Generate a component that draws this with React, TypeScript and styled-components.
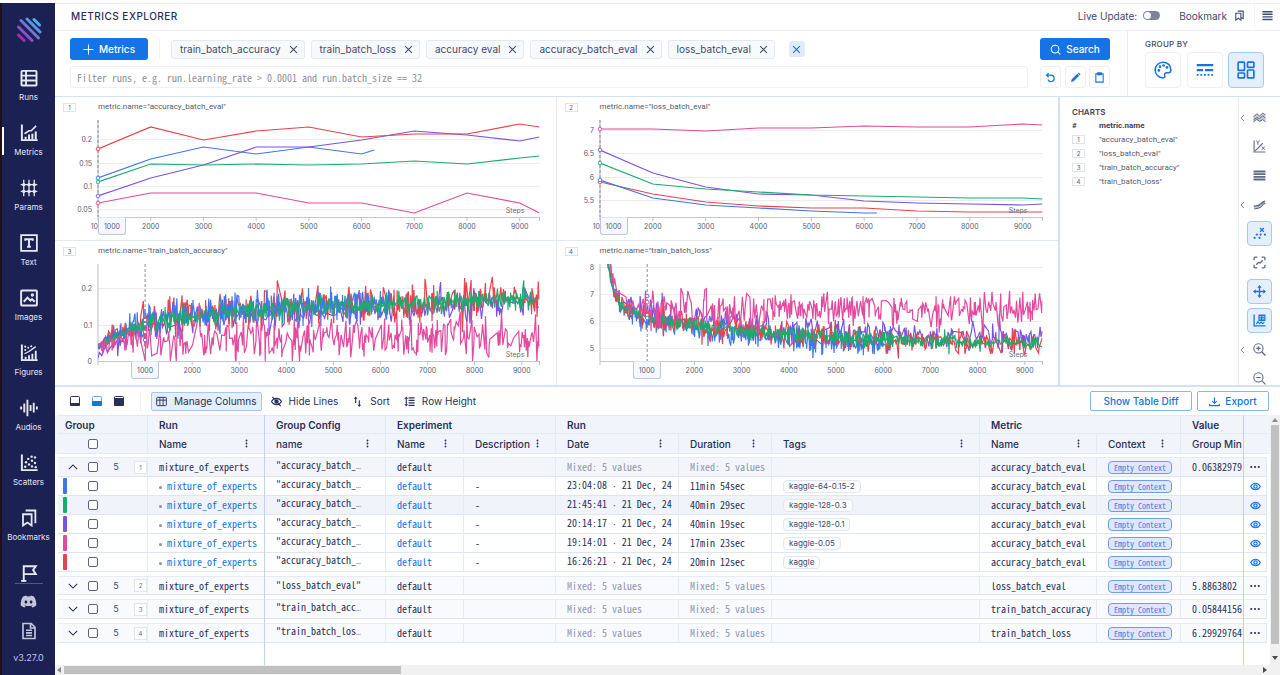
import React from 'react';
import styled, { createGlobalStyle, css } from 'styled-components';
import { FaDiscord } from 'react-icons/fa';

const MONO = '"Noto Sans Mono CJK SC", "Noto Sans Mono CJK JP", "Liberation Mono", monospace';
const C = {
  navy: '#27305a',
  ink: '#414b6d',
  soft: '#606986',
  muted: '#8e94ac',
  blue: '#1473e6',
  line: '#e3e9f4',
  edge: '#d2e3f8',
  pin: '#c3d1f0',
  tint: '#e5effc',
  tintEdge: '#a6c8f4',
  head: '#f1f4fa',
};
const S = { red: '#e8424a', blue: '#3f76ea', green: '#1cab6c', purple: '#7b53e2', pink: '#e2499f' };

const Global = createGlobalStyle`
  * { box-sizing: border-box; }
  html, body { margin: 0; padding: 0; background: #fff; }
  body { font-family: Inter, "Liberation Sans", sans-serif; font-size: 10px; color: ${C.navy}; overflow: hidden; }
  button { font: inherit; color: inherit; background: none; border: 0; padding: 0; cursor: pointer; }
  a { color: inherit; text-decoration: none; }
  svg { display: block; flex: none; }
`;

/* ---------- frame ---------- */
const Page = styled.div`
  display: flex;
  height: 100vh;
  border-top: 3px solid #fdfdfe;
`;
const Sidebar = styled.aside`
  width: 55px;
  flex: none;
  background: #1c2153;
  border-left: 2px solid #1f101c;
  color: #fff;
  display: flex;
  flex-direction: column;
  align-items: center;
`;
const LogoLink = styled.a`
  padding: 14px 0 15px;
`;
const Nav = styled.nav`
  flex: 1;
  min-height: 0;
  overflow: hidden;
  width: 100%;
`;
const NavLink = styled.a<{ $active?: boolean }>`
  height: 55px;
  display: flex;
  flex-direction: column;
  align-items: center;
  justify-content: center;
  gap: 4px;
  font-size: 8px;
  line-height: 12px;
  color: #e6e8f2;
  position: relative;
  ${p => p.$active && css`
    &::before {
      content: '';
      position: absolute;
      left: 0;
      top: 14px;
      width: 2px;
      height: 28px;
      background: #fff;
    }
  `}
`;
const NavText = styled.span`
  height: 12px;
`;
const SideFoot = styled.div`
  width: 28px;
  border-top: 1px solid #545982;
  display: flex;
  flex-direction: column;
  align-items: center;
  gap: 12px;
  padding: 9px 0 11px;
  color: #c3c6d6;
  font-size: 9px;
  line-height: 12px;
`;
const Main = styled.main`
  flex: 1;
  min-width: 0;
  display: flex;
  flex-direction: column;
  border-top: 1px solid #ebedf3;
`;

/* ---------- header ---------- */
const TopBar = styled.header`
  height: 27px;
  padding: 0 7px 3px 16px;
  border-bottom: 1px solid #edf2f9;
  display: flex;
  align-items: center;
  color: ${C.ink};
`;
const Title = styled.h1`
  margin: 0;
  flex: 1;
  font-size: 10px;
  font-weight: 500;
  letter-spacing: 0.5px;
  color: ${C.navy};
`;
const LiveLabel = styled.label`
  display: flex;
  align-items: center;
  gap: 6px;
  margin-right: 19px;
`;
const Toggle = styled.input`
  appearance: none;
  margin: 0;
  width: 17px;
  height: 9px;
  border-radius: 5px;
  background: #7c829c;
  display: flex;
  align-items: center;
  &::before {
    content: '';
    width: 7px;
    height: 7px;
    margin-left: 1px;
    border-radius: 50%;
    background: #fff;
  }
`;
const BarButton = styled.button`
  display: flex;
  align-items: center;
  gap: 7px;
`;
const MenuButton = styled(BarButton)`
  margin-left: 9px;
  padding-left: 7px;
  border-left: 1px solid #f0f3f9;
  height: 23px;
`;

/* ---------- query controls ---------- */
const Controls = styled.section`
  display: flex;
  height: 66px;
  border-bottom: 1px solid ${C.edge};
`;
const QueryArea = styled.form`
  flex: 1;
  min-width: 0;
  display: flex;
  padding: 7px 17px 8px 15px;
  gap: 12px;
`;
const QueryMain = styled.div`
  flex: 1;
  min-width: 0;
`;
const QueryRow = styled.div`
  display: flex;
  align-items: center;
  height: 22px;
`;
const Primary = styled.button`
  height: 22px;
  width: 100%;
  border-radius: 3px;
  background: ${C.blue};
  color: #fff;
  font-weight: 500;
  display: flex;
  align-items: center;
  justify-content: center;
  gap: 5px;
`;
const AddMetrics = styled(Primary)`
  width: 78px;
`;
const Rule = styled.span<{ $gap: number }>`
  width: 1px;
  height: 20px;
  margin: 0 ${p => p.$gap}px;
  background: #edf1f8;
`;
const Chip = styled.span`
  height: 19px;
  margin-right: 6px;
  padding: 0 6px 0 8px;
  border: 1px solid #e3e8f2;
  border-radius: 3px;
  background: #f8f9fc;
  color: ${C.ink};
  display: flex;
  align-items: center;
  gap: 8px;
`;
const ClearAll = styled.button`
  width: 16px;
  height: 16px;
  margin-left: 8px;
  border-radius: 3px;
  background: #dfebfb;
  color: ${C.blue};
  display: grid;
  place-items: center;
`;
const FilterInput = styled.input`
  display: block;
  width: 100%;
  height: 22px;
  margin-top: 6px;
  padding: 0 6px;
  border: 1px solid #edf0f7;
  border-radius: 3px;
  font-family: ${MONO};
  font-size: 10px;
  color: ${C.ink};
  outline: none;
  &::placeholder { color: #8a8f9e; opacity: 1; }
`;
const SearchCol = styled.div`
  width: 70px;
`;
const IconRow = styled.div`
  display: flex;
  justify-content: space-between;
  margin-top: 6px;
`;
const SmallIconButton = styled.button`
  width: 21px;
  height: 22px;
  border: 1px solid #edf0f7;
  border-radius: 3px;
  color: ${C.blue};
  display: grid;
  place-items: center;
`;
const GroupBy = styled.div`
  width: 153px;
  border-left: 1px solid #e6edf7;
  padding: 8px 16px 0 17px;
`;
const GroupTitle = styled.h2`
  margin: 0 0 2px;
  font-size: 8px;
  line-height: 11px;
  font-weight: 500;
  letter-spacing: 0.2px;
  color: ${C.ink};
`;
const GroupRow = styled.div`
  display: flex;
  justify-content: space-between;
`;
const GroupButton = styled.button<{ $on?: boolean }>`
  width: 36px;
  height: 36px;
  border: 1px solid ${p => (p.$on ? C.tintEdge : '#edf1f8')};
  border-radius: 4px;
  background: ${p => (p.$on ? C.tint : '#fff')};
  color: ${C.blue};
  display: grid;
  place-items: center;
`;

/* ---------- charts ---------- */
const ChartSection = styled.section`
  display: flex;
  height: 290px;
  border-bottom: 2px solid ${C.edge};
`;
const ChartGrid = styled.div`
  flex: 1;
  min-width: 0;
  display: grid;
  grid-template-columns: 1fr 1fr;
  grid-template-rows: 144px 144px;
`;
const ChartCell = styled.article`
  min-width: 0;
  border-right: 1px solid ${C.line};
  border-bottom: 1px solid ${C.line};
  padding: 5px 16px 0 8px;
  &:nth-child(even) { border-right: 0; }
  &:nth-child(n + 3) { border-bottom: 0; }
`;
const ChartHead = styled.header`
  display: flex;
  align-items: center;
  gap: 22px;
  height: 10px;
  color: #555b6b;
`;
const Num = styled.span`
  width: 13px;
  height: 9px;
  border: 1px solid #dfe3ec;
  font-size: 6px;
  line-height: 7px;
  text-align: center;
  color: #555b6b;
  display: inline-block;
`;
const ChartTitle = styled.h3`
  margin: 0;
  font: 400 8px/10px Roboto, sans-serif;
`;
const Plot = styled.div`
  position: relative;
  margin: 8px 0 0 35px;
  & > svg { overflow: visible; }
`;
const PlotSvg = styled.svg`
  font-size: 7px;
  fill: #555e7c;
`;
const StepTag = styled.span<{ $center?: boolean }>`
  position: absolute;
  top: 97px;
  width: 28px;
  height: 18px;
  border: 1px solid #b9c5e6;
  border-top-color: #dfe4f0;
  border-radius: 0 0 3px 3px;
  background: #f7f8fd;
  font-size: 7px;
  line-height: 17px;
  text-align: center;
  color: #555e7c;
  transform: ${p => (p.$center ? 'translateX(-50%)' : 'none')};
`;
const Legend = styled.aside`
  width: 180px;
  border-left: 2px solid ${C.edge};
  padding: 9px 12px;
`;
const LegendTitle = styled.h2`
  margin: 0;
  font-size: 8px;
  line-height: 12px;
  font-weight: 600;
  color: #3b4259;
`;
const LegendTable = styled.table`
  border-collapse: collapse;
  font: 400 8px/9px Roboto, sans-serif;
  color: #555b6b;
  td, th { height: 14px; padding: 0; text-align: left; vertical-align: middle; }
  th { color: #3b4259; font-weight: 700; }
  th:first-child, td:first-child { width: 27px; }
  ${Num} { display: block; font-family: Inter, sans-serif; }
`;
const Tools = styled.div`
  width: 42px;
  border-left: 1px solid #e6edf7;
  padding-top: 8px;
  overflow: hidden;
`;
const ToolRow = styled.div`
  height: 29px;
  display: flex;
  align-items: flex-start;
`;
const Caret = styled.span`
  width: 8px;
  height: 25px;
  color: #7b8299;
  display: flex;
  align-items: center;
  padding-left: 1px;
`;
const Tool = styled.button<{ $on?: boolean }>`
  width: 25px;
  height: 25px;
  border: 1px solid ${p => (p.$on ? C.tintEdge : 'transparent')};
  border-radius: 4px;
  background: ${p => (p.$on ? C.tint : 'transparent')};
  color: ${p => (p.$on ? C.blue : C.soft)};
  display: grid;
  place-items: center;
`;

/* ---------- table ---------- */
const TableBar = styled.div`
  display: flex;
  align-items: center;
  height: 28px;
  padding: 0 11px 0 14px;
  flex: none;
`;
const LayoutButton = styled.button`
  margin-right: 10px;
`;
const TextButton = styled.button<{ $on?: boolean }>`
  height: 19px;
  margin-right: 4px;
  padding: 0 4px;
  border: 1px solid ${p => (p.$on ? C.tintEdge : 'transparent')};
  border-radius: 2px;
  background: ${p => (p.$on ? C.tint : 'transparent')};
  color: ${C.navy};
  display: flex;
  align-items: center;
  gap: 7px;
`;
const Outline = styled.button<{ $w: number }>`
  width: ${p => p.$w}px;
  height: 20px;
  margin-left: 5px;
  border: 1px solid #87b5f0;
  border-radius: 2px;
  color: ${C.blue};
  font-weight: 500;
  display: flex;
  align-items: center;
  justify-content: center;
  gap: 5px;
`;
const Spring = styled.span`
  flex: 1;
`;
const TableArea = styled.div`
  flex: 1;
  min-height: 0;
  display: flex;
`;
const TableView = styled.div`
  flex: 1;
  min-width: 0;
  overflow: hidden;
  padding: 0 3px;
  position: relative;
`;
const PinEdge = styled.span<{ $side: 'left' | 'right'; $at: number }>`
  position: absolute;
  top: 0;
  bottom: 0;
  ${p => p.$side}: ${p => p.$at}px;
  width: 1px;
  background: ${C.pin};
`;
const Grid = styled.table`
  width: 100%;
  table-layout: fixed;
  border-collapse: separate;
  border-spacing: 0;
  th, td { padding: 0 0 0 11px; text-align: left; white-space: nowrap; overflow: hidden; font-weight: 500; }
  thead th {
    background: ${C.head};
    border-right: 1px solid #e4eaf4;
    border-bottom: 1px solid #e4eaf4;
    height: 20px;
    font-size: 10px;
    line-height: 12px;
  }
  thead tr:first-child th { height: 19px; font-weight: 600; border-top: 1px solid ${C.line}; }
  thead th:first-child { box-shadow: -3px 0 0 ${C.head}; padding-left: 7px; overflow: visible; }
  thead tr:last-child th:first-child { padding-left: 0; }
  thead th:last-child { box-shadow: 3px 0 0 ${C.head}; border-right: 0; overflow: visible; }
  tbody::before { content: ''; display: block; height: 3px; }
  tbody + tbody::before { height: 4px; }
  tbody td { height: 19px; border-right: 1px solid #e4eaf4; border-bottom: 1px solid #dfe6f2; font-family: ${MONO}; font-size: 10px; line-height: 14px; font-weight: 400; }
  tbody td:first-child, tbody td:last-child { padding: 0; }
  tbody td:nth-child(3) { padding-bottom: 2px; }
`;
const DataRow = styled.tr<{ $tone: 'open' | 'plain' | 'hover' | 'group' }>`
  td {
    background: ${p => ({ open: '#f3f5fa', plain: '#fff', hover: '#f0f3f9', group: '#f9fafd' })[p.$tone]};
    ${p => (p.$tone === 'open' || p.$tone === 'group') && css`border-top: 1px solid #e6ebf5;`}
  }
`;
const ThInner = styled.span`
  display: flex;
  align-items: center;
  justify-content: space-between;
  padding-right: 13px;
`;
const Box = styled.input`
  appearance: none;
  margin: 0;
  width: 10px;
  height: 10px;
  border: 1px solid #5c6480;
  border-radius: 2px;
  background: #fff;
  flex: none;
`;
const GroupCell = styled.span`
  display: flex;
  align-items: center;
  height: 17px;
  & > button { width: 30px; display: grid; place-items: center; color: ${C.navy}; }
  & > b { width: 36px; text-align: center; font: 400 9px/12px Inter, sans-serif; color: ${C.ink}; }
  & > i { width: 13px; height: 13px; border: 1px solid #e1e6f0; background: #fff; font: 400 6px/11px Inter, sans-serif; text-align: center; color: ${C.soft}; }
`;
const RunCell = styled.span<{ $color: string }>`
  display: flex;
  align-items: center;
  height: 18px;
  padding-left: 5px;
  &::before { content: ''; width: 4px; height: 16px; border-radius: 1px; background: ${p => p.$color}; margin-right: 21px; }
`;
const RunLink = styled.a`
  color: ${C.blue};
`;
const Dot = styled.span`
  display: inline-block;
  width: 3px;
  height: 3px;
  margin: 0 5px 0 0;
  border-radius: 50%;
  background: #8b91a6;
  vertical-align: middle;
`;
const Dim = styled.span`
  color: ${C.muted};
`;
/* the CJK mono face draws these two marks at double width */
const NarrowMark = styled.span`
  font-family: "Liberation Mono", monospace;
  font-size: 8px;
`;
const Tag = styled.span`
  display: inline-block;
  height: 13px;
  padding: 0 5px;
  border: 1px solid #e1e6f0;
  border-radius: 4px;
  background: #fbfcfe;
  font: 400 8px/11px Inter, sans-serif;
  color: ${C.ink};
  vertical-align: middle;
`;
const Context = styled.span`
  display: inline-block;
  height: 13px;
  padding: 0 5px;
  border: 1px solid #6f9bee;
  border-radius: 4px;
  background: #dfe8fb;
  font-size: 8px;
  line-height: 11px;
  color: #4a7ae0;
  vertical-align: middle;
`;
const ActionButton = styled.button<{ $blue?: boolean }>`
  width: 22px;
  height: 16px;
  color: ${p => (p.$blue ? C.blue : C.navy)};
  display: grid;
  place-items: center;
`;
const VBar = styled.div`
  width: 10px;
  background: #f1f1f1;
  display: flex;
  flex-direction: column;
  align-items: center;
  justify-content: space-between;
  padding: 3px 0 5px;
  color: #8a8a8a;
  &::before { content: ''; order: 1; flex: 1; width: 8px; background: #c1c1c1; margin: 3px 0 12px; }
  & > svg:last-child { order: 2; color: #4a4a4a; }
`;
const HBar = styled.div`
  height: 10px;
  flex: none;
  background: #f1f1f1;
  display: flex;
  align-items: center;
  padding: 0 13px 0 2px;
  gap: 3px;
  color: #8a8a8a;
  & > span { width: 337px; height: 8px; background: #c1c1c1; }
  & > svg:last-child { margin-left: auto; color: #4a4a4a; }
`;

/* ---------- icons ---------- */
type IconProps = { size?: number; sw?: number; children: React.ReactNode };
const Icon = ({ size = 18, sw = 2, children }: IconProps) => (
  <svg width={size} height={size} viewBox="0 0 24 24" fill="none" stroke="currentColor" strokeWidth={sw} aria-hidden="true">
    {children}
  </svg>
);
const X = ({ size = 10 }: { size?: number }) => (
  <Icon size={size} sw={2.8}><path d="M3 3l18 18M21 3L3 21" /></Icon>
);
const dots = (pts: number[][], r: number) => pts.map(([x, y], i) => <circle key={i} cx={x} cy={y} r={r} fill="currentColor" stroke="none" />);

const AXIS = 'M2.5 0.5V21.5H23.5';
const NAV: { label: string; hideText?: boolean; icon: React.ReactNode }[] = [
  { label: 'Runs', icon: <><rect x="2" y="2.500" width="20" height="19.500" rx="1" /><path d="M2 8.800h20M2 15.300h20M8 2v20" strokeWidth="2.500" /></> },
  { label: 'Metrics', icon: <><path d={AXIS} /><path d="M7.500 21v-4M12 21v-7M16.500 21v-8M21 21V10" strokeWidth="2.700" /><path d="M6 13l6-4 3 0L21.500 2.500" strokeWidth="2.200" /></> },
  { label: 'Params', icon: <><path d="M5 1v22M12 1v22M19 1v22M1 7.500h22M1 16.500h22" strokeWidth="1.700" />{dots([[5, 16.500], [12, 7.500], [19, 16.500], [19, 7.500], [5, 7.500], [12, 16.500]], 2.200)}</> },
  { label: 'Text', icon: <><rect x="1.500" y="1.500" width="21" height="21" strokeWidth="2.400" /><path d="M7 9V7h10v2M12 7v10M9.500 17h5" /></> },
  { label: 'Images', icon: <><rect x="1.500" y="2" width="21" height="20" rx="1" /><path d="M5 17l5-5.500 4 4 2-2 3.500 3.500" /><circle cx="16.500" cy="8" r="1" /></> },
  { label: 'Figures', icon: <><path d={AXIS} /><path d="M7.500 21v-4M12 21v-6M16.500 21v-8M21 21V9" strokeWidth="2.500" /><path d="M6 13l6-3 9-6.500" strokeWidth="1.800" />{dots([[7, 8], [11, 5], [15, 3], [7, 3.500]], 1.400)}</> },
  { label: 'Audios', icon: <path d="M1.500 10v4M5.700 6v12M9.900 1v22M14.100 8v8M18.300 5v13M22.500 10v4" strokeWidth="2.500" /> },
  { label: 'Scatters', icon: <><path d={AXIS} />{dots([[7, 17], [8, 11], [12, 14], [11, 6.500], [16, 9], [16, 16.500], [20, 12], [20, 4.500], [21, 17.500], [15.500, 3.500]], 1.600)}</> },
  { label: 'Bookmarks', icon: <><path d="M4 7h11.500v15l-5.700-4-5.800 4z" strokeWidth="2.400" /><path d="M7.500 2H20.500V19" strokeWidth="2.400" /></> },
  { label: 'Explorations', hideText: true, icon: <path d="M5 24V3h16l-3.500 5 3.500 5.500h-16M1.500 22.500h7" strokeWidth="2.600" /> },
];

const Logo = () => (
  <svg width="26" height="26" viewBox="0 0 26 26" fill="none" strokeWidth="3" strokeLinecap="round" aria-label="Aim">
    <defs>
      <linearGradient id="brand" gradientUnits="userSpaceOnUse" x1="3" y1="23" x2="23" y2="3">
        <stop offset="0" stopColor="#b5179e" />
        <stop offset="0.300" stopColor="#8a4fc8" />
        <stop offset="0.600" stopColor="#6a7fd8" />
        <stop offset="1" stopColor="#35c4f5" />
      </linearGradient>
    </defs>
    <path stroke="url(#brand)" d="M18 2.500l5.500 5.500M11 2l13 13M5 3.500l17.500 17.500M2.500 10l13.500 13.500M2.500 18l5.500 5.500" />
  </svg>
);

const LayoutIcon = ({ fill, top, color }: { fill: string; top: number; color: string }) => (
  <svg width="12" height="12" viewBox="0 0 12 12" aria-hidden="true">
    <rect x="1.500" y="1.500" width="9" height="9" rx="1" fill="#fff" stroke={color} />
    <rect x="1" y={top} width="10" height={11 - top} rx="1" fill={fill} />
  </svg>
);

/* ---------- chart data ---------- */
type Series = { color: string; pts: [number, number][] };
const SPAN = 9375;
const stepAt = (i: number) => (i === 9 ? 8375 : i * 1000);
const evalSeries = (color: string, ys: number[], lastStep?: number): Series => ({
  color,
  pts: ys.map((y, i) => [((lastStep && i === ys.length - 1 ? lastStep : stepAt(i)) / 8375) * 1000, y - 120]),
});

const ACCURACY: Series[] = [
  evalSeries(S.pink, [203, 193, 193, 193, 203, 203, 213, 193, 203, 213]),
  evalSeries(S.purple, [196, 178, 165, 147, 147, 140, 131, 135, 141, 137]),
  evalSeries(S.green, [182, 164, 165, 164, 165, 164, 161, 164, 158, 156]),
  evalSeries(S.blue, [178, 159, 147, 154, 147, 154, 150], 5240),
  evalSeries(S.red, [149, 127, 140, 131, 127, 137, 134, 134, 124, 127]),
];
const LOSS: Series[] = [
  evalSeries(S.pink, [129, 129, 131, 128, 128, 126, 127, 127, 124, 125]),
  evalSeries(S.purple, [150, 173, 187, 194, 195, 201, 203, 204, 205, 204]),
  evalSeries(S.green, [163, 184, 189, 192, 195, 196, 197, 198, 198, 199]),
  evalSeries(S.red, [182, 194, 202, 206, 208, 208, 211, 212, 212, 212]),
  evalSeries(S.blue, [180, 198, 205, 208, 211, 213, 213], 5240),
];

function noisy(color: string, seed: number, gap: number, end: number, mean: (s: number) => number, dev: number, toY: (v: number) => number): Series {
  let state = seed;
  const rnd = () => {
    state = (state * 1664525 + 1013904223) % 4294967296;
    return state / 4294967296;
  };
  const pts: [number, number][] = [];
  let s = 0;
  while (s < end) {
    const g = rnd() + rnd() + rnd() + rnd() - 2;
    const spike = rnd() > 0.94 ? 1.8 : 1.1;
    const settle = Math.min(1, 0.35 + s / 1500);
    pts.push([(s / SPAN) * 1000, toY(mean(s) + g * 1.5 * dev * spike * settle)]);
    s += gap * (0.2 + 1.8 * rnd() * rnd() * (rnd() > 0.93 ? 5 : 1.4));
  }
  return { color, pts };
}
const accY = (v: number) => Math.min(97, 97 - v * 364);
const lossY = (v: number) => 3.500 + (8 - v) * 27;
const rise = (s: number) => 0.035 + 0.09 * (1 - Math.exp(-s / 1000)) + (0.045 * s) / SPAN;
const fall = (s: number) => 5.17 + 1.5 * Math.exp(-s / 2700) + 6 * Math.exp(-s / 130);

const TRAIN_ACC: Series[] = [
  noisy(S.purple, 11, 30, SPAN, s => rise(s) - 0.014, 0.022, accY),
  noisy(S.red, 23, 22, SPAN, s => rise(s) + 0.006, 0.024, accY),
  noisy(S.blue, 37, 13, 6200, s => rise(s) + 0.008, 0.021, accY),
  noisy(S.green, 41, 14, SPAN, s => rise(s) + 0.001, 0.014, accY),
  noisy(S.pink, 59, 24, SPAN, s => 0.042 + 0.022 * Math.min(1, s / 700), 0.030, accY),
];
const TRAIN_LOSS: Series[] = [
  noisy(S.purple, 13, 26, SPAN, s => fall(s) + 0.2, 0.24, lossY),
  noisy(S.blue, 29, 13, 6200, s => fall(s) - 0.14, 0.22, lossY),
  noisy(S.red, 31, 22, SPAN, s => fall(s), 0.23, lossY),
  noisy(S.green, 43, 14, SPAN, s => fall(s), 0.14, lossY),
  noisy(S.pink, 67, 24, SPAN, s => 6.450 + 6 * Math.exp(-s / 170), 0.34, lossY),
];

type ChartDef = {
  name: string;
  series: Series[];
  yTicks: [string, number][];
  zoomed: boolean;
  marks: [string, number][];
};
const CHARTS: ChartDef[] = [
  { name: 'accuracy_batch_eval', series: ACCURACY, zoomed: true, yTicks: [['0.2', 19], ['0.15', 43], ['0.1', 66], ['0.05', 89]], marks: ACCURACY.map(s => [s.color, s.pts[0][1]]) },
  { name: 'loss_batch_eval', series: LOSS, zoomed: true, yTicks: [['7', 10], ['6.5', 33], ['6', 57], ['5.5', 80]], marks: LOSS.map(s => [s.color, s.pts[0][1]]) },
  { name: 'train_batch_accuracy', series: TRAIN_ACC, zoomed: false, yTicks: [['0.2', 24], ['0.1', 61], ['0', 97]], marks: [[S.red, 56], [S.blue, 60], [S.purple, 76], [S.pink, 68]] },
  { name: 'train_batch_loss', series: TRAIN_LOSS, zoomed: false, yTicks: [['8', 3], ['7', 30], ['6', 57], ['5', 84]], marks: [[S.purple, 32], [S.pink, 38], [S.red, 51], [S.green, 54]] },
];

function Chart({ def, index }: { def: ChartDef; index: number }) {
  const span = def.zoomed ? 8375 : SPAN;
  const pct = (step: number) => `${(((step - (def.zoomed ? 1000 : 0)) / span) * 100).toFixed(2)}%`;
  const steps = [2000, 3000, 4000, 5000, 6000, 7000, 8000, 9000];
  return (
    <ChartCell>
      <ChartHead>
        <Num>{index + 1}</Num>
        <ChartTitle>metric.name="{def.name}"</ChartTitle>
      </ChartHead>
      <Plot>
        <PlotSvg width="100%" height="116" role="img" aria-label={def.name}>
          {def.yTicks.map(([label, y]) => (
            <g key={label}>
              <line x1="0" x2="100%" y1={y + 0.5} y2={y + 0.5} stroke="#eaecf2" />
              <text x="-6" y={y + 3} textAnchor="end">{label}</text>
            </g>
          ))}
          <line x1="0" x2="0" y1="0" y2="101" stroke="#b9bdca" />
          <line x1="0" x2="100%" y1="97.5" y2="97.5" stroke="#c3c7d2" />
          <line x1="100%" x2="100%" y1="97" y2="101" stroke="#b9bdca" />
          {steps.map(s => (
            <g key={s}>
              <line x1={pct(s)} x2={pct(s)} y1="97" y2="101" stroke="#b9bdca" />
              <text x={pct(s)} y="109" textAnchor="middle">{s}</text>
            </g>
          ))}
          {def.zoomed && <text x="0" y="109" textAnchor="end">10</text>}
          <svg x="0" y="0" width="100%" height="98" viewBox="0 0 1000 98" preserveAspectRatio="none">
            {def.series.map(s => (
              <polyline key={s.color} points={s.pts.map(([x, y]) => `${x.toFixed(1)},${y.toFixed(1)}`).join(' ')} fill="none" stroke={s.color} strokeWidth={1.2} vectorEffect="non-scaling-stroke" />
            ))}
          </svg>
          <line x1={pct(1000)} x2={pct(1000)} y1="0" y2="97" stroke="#8d8f98" strokeDasharray="3 2" />
          {def.marks.map(([c, y]) => (
            <circle key={c} cx={pct(1000)} cy={y} r="1.800" fill="#fff" stroke={c} strokeWidth="0.900" />
          ))}
          <text x="94.5%" y="93" textAnchor="middle" fill="#6d7078">Steps</text>
        </PlotSvg>
        <StepTag $center={!def.zoomed} style={{ left: pct(1000) }}>1000</StepTag>
      </Plot>
    </ChartCell>
  );
}

const TOOLS: { label: string; on?: boolean; caret?: boolean; icon: React.ReactNode }[] = [
  { label: 'Aggregate', caret: true, icon: <><path d="M1 10l5-4 6 3 6-5 5 3v13l-5-3-6 3-5-3-6 4z" fill="currentColor" fillOpacity="0.350" stroke="none" /><path d="M1 11l6-6 5 4 6-5 5 3M1 20l6-5 5 4 6-3 5 4M1 16l6-4 5 2 6-5 5 4" strokeWidth="1.800" /></> },
  { label: 'Axes scale', icon: <><path d="M2 1v21h21M4 20L18 6" /><path d="M6 1l3 4 3-4M9 5v4M16 12l6 6M22 12l-6 6" strokeWidth="1.800" /></> },
  { label: 'Align', icon: <path d="M1 4.500h22M1 9.500h22M1 14.500h22M1 19.500h22" strokeWidth="3.600" /> },
  { label: 'Smoothing', caret: true, icon: <><path d="M1 15c8-1 9 0 13-4s5-5 8-5" strokeWidth="2.600" /><path d="M2 20c8-1 11-1 14-5s4-4 7-5" strokeWidth="2" /><path d="M2 17l8-1 6-5 6-3" strokeWidth="1.400" /></> },
  { label: 'Outliers', on: true, icon: <><path d="M13 2l7 7M20 2l-7 7" strokeWidth="2.600" />{dots([[3, 20], [7, 14], [12, 20], [14, 14], [22, 14]], 2.100)}</> },
  { label: 'Zoom to fit', icon: <><path d="M2 8V4q0-2 2-2h4M16 2h4q2 0 2 2v4M22 16v4q0 2-2 2h-4M8 22H4q-2 0-2-2v-4" strokeWidth="2.400" /><path d="M6 16l4-4 3 1 5-5" strokeWidth="2.400" /></> },
  { label: 'Highlight', on: true, icon: <><path d="M12 3v18M3 12h18" strokeWidth="2.400" /><path d="M12 0l4 5H8zM12 24l4-5H8zM0 12l5-4v8zM24 12l-5-4v8z" fill="currentColor" stroke="none" /></> },
  { label: 'Tooltip', on: true, icon: <><path d="M2 1v21h21" strokeWidth="2.400" /><path d="M10 1h13v12H10z" fill="currentColor" stroke="none" /><path d="M12 5h3M17 5h4M12 9h3M17 9h4" stroke="#fff" strokeWidth="1.500" /><path d="M6 19l3-5 3 4 3-3 3 3 3-3" strokeWidth="2" /></> },
  { label: 'Zoom in', caret: true, icon: <><circle cx="10" cy="10" r="8.500" /><path d="M16 16l7 7M10 6v8M6 10h8" strokeWidth="2.500" /></> },
  { label: 'Zoom out', icon: <><circle cx="10" cy="10" r="8.500" /><path d="M16 16l7 7M6 10h8" strokeWidth="2" /></> },
];

const RUNS = [
  { color: S.blue, date: '23:04:08 · 21 Dec, 24', dur: '11min 54sec', tag: 'kaggle-64-0.15-2' },
  { color: S.green, date: '21:45:41 · 21 Dec, 24', dur: '40min 29sec', tag: 'kaggle-128-0.3' },
  { color: S.purple, date: '20:14:17 · 21 Dec, 24', dur: '40min 19sec', tag: 'kaggle-128-0.1' },
  { color: S.pink, date: '19:14:01 · 21 Dec, 24', dur: '17min 23sec', tag: 'kaggle-0.05' },
  { color: S.red, date: '16:26:21 · 21 Dec, 24', dur: '20min 12sec', tag: 'kaggle' },
];
const GROUPS = [
  { config: '"accuracy_batch_…', metric: 'accuracy_batch_eval', min: '0.06382979', open: true },
  { config: '"loss_batch_eval"', metric: 'loss_batch_eval', min: '5.8863802', open: false },
  { config: '"train_batch_acc…', metric: 'train_batch_accuracy', min: '0.05844156', open: false },
  { config: '"train_batch_los…', metric: 'train_batch_loss', min: '6.29929764', open: false },
];
const COLS = [90, 117, 121, 78, 92, 123, 93, 0, 117, 84, 63, 23];

const narrow = (text: string) =>
  text.split(/([·…])/).map((part, i) => (i % 2 ? <NarrowMark key={i}>{part}</NarrowMark> : part));

const More = () => <Icon size={9}>{dots([[12, 4], [12, 12], [12, 20]], 2.400)}</Icon>;
const Head = ({ children, more = true }: { children: string; more?: boolean }) => (
  <th scope="col"><ThInner>{children}{more && <More />}</ThInner></th>
);

function RunsTable() {
  return (
    <Grid>
      <colgroup>{COLS.map((w, i) => <col key={i} style={w ? { width: w } : undefined} />)}</colgroup>
      <thead>
        <tr>
          <th>Group</th><th>Run</th><th>Group Config</th><th colSpan={2}>Experiment</th>
          <th colSpan={3}>Run</th><th colSpan={2}>Metric</th><th>Value</th><th />
        </tr>
        <tr>
          <th><RunCell $color="transparent"><Box type="checkbox" aria-label="Select all" /></RunCell></th>
          <Head>Name</Head><Head>name</Head><Head>Name</Head><Head>Description</Head><Head>Date</Head>
          <Head>Duration</Head><Head>Tags</Head><Head>Name</Head><Head>Context</Head><Head more={false}>Group Min</Head><th />
        </tr>
      </thead>
      {GROUPS.map((g, gi) => (
        <tbody key={g.metric}>
          <DataRow $tone={g.open ? 'open' : 'group'}>
            <td>
              <GroupCell>
                <button aria-label={g.open ? 'Collapse' : 'Expand'}>
                  <Icon size={10} sw={2.6}><path d={g.open ? 'M2 17L12 7l10 10' : 'M2 7l10 10L22 7'} /></Icon>
                </button>
                <Box type="checkbox" aria-label={`Select ${g.metric}`} />
                <b>5</b>
                <i>{gi + 1}</i>
              </GroupCell>
            </td>
            <td>mixture_of_experts</td>
            <td>{narrow(g.config)}</td>
            <td>default</td>
            <td />
            <td><Dim>Mixed: 5 values</Dim></td>
            <td><Dim>Mixed: 5 values</Dim></td>
            <td />
            <td>{g.metric}</td>
            <td><Context>Empty Context</Context></td>
            <td>{g.min}</td>
            <td><ActionButton aria-label="More"><Icon size={10}>{dots([[3, 12], [12, 12], [21, 12]], 2.600)}</Icon></ActionButton></td>
          </DataRow>
          {g.open && RUNS.map((r, ri) => (
            <DataRow key={r.tag} $tone={ri === 1 ? 'hover' : 'plain'}>
              <td><RunCell $color={r.color}><Box type="checkbox" aria-label={`Select ${r.tag}`} /></RunCell></td>
              <td><Dot /><RunLink href="#run">mixture_of_experts</RunLink></td>
              <td>{narrow(g.config)}</td>
              <td><RunLink href="#experiment">default</RunLink></td>
              <td>-</td>
              <td>{narrow(r.date)}</td>
              <td>{r.dur}</td>
              <td><Tag>{r.tag}</Tag></td>
              <td>{g.metric}</td>
              <td><Context>Empty Context</Context></td>
              <td />
              <td>
                <ActionButton $blue aria-label="Hide line">
                  <Icon size={11} sw={2.600}><path d="M1.500 12c5-9.500 16-9.500 21 0-5 9.500-16 9.500-21 0z" /><circle cx="12" cy="12" r="3.600" /></Icon>
                </ActionButton>
              </td>
            </DataRow>
          ))}
        </tbody>
      ))}
    </Grid>
  );
}

export default function App() {
  return (
    <>
      <Global />
      <Page>
        <Sidebar>
          <LogoLink href="#home"><Logo /></LogoLink>
          <Nav>
            {NAV.map(n => (
              <NavLink key={n.label} href={`#${n.label}`} aria-label={n.label} $active={n.label === 'Metrics'}>
                <Icon size={18} sw={2.600}>{n.icon}</Icon>
                <NavText>{!n.hideText && n.label}</NavText>
              </NavLink>
            ))}
          </Nav>
          <SideFoot>
            <FaDiscord size={17} />
            <Icon size={18} sw={2.200}><path d="M4 2h11l5 5v15H4zM14 2v6h6M8 11h8M8 14.500h8M8 18h8" /></Icon>
            <span>v3.27.0</span>
          </SideFoot>
        </Sidebar>
        <Main>
          <TopBar>
            <Title>METRICS EXPLORER</Title>
            <LiveLabel>Live Update:<Toggle type="checkbox" role="switch" /></LiveLabel>
            <BarButton>
              Bookmark
              <Icon size={11} sw={2.400}><path d="M4 7h11v15l-5.500-4-5.500 4zM8 2.500h12V19l-4-2" /></Icon>
            </BarButton>
            <MenuButton aria-label="Menu">
              <Icon size={11} sw={3.200}><path d="M1 4h22M1 9.500h22M1 15h22M1 20.500h22" /></Icon>
            </MenuButton>
          </TopBar>

          <Controls>
            <QueryArea onSubmit={e => e.preventDefault()}>
              <QueryMain>
                <QueryRow>
                  <AddMetrics type="button"><Icon size={11} sw={2.200}><path d="M12 1v22M1 12h22" /></Icon>Metrics</AddMetrics>
                  <Rule $gap={11} />
                  {['train_batch_accuracy', 'train_batch_loss', 'accuracy eval', 'accuracy_batch_eval', 'loss_batch_eval'].map(c => (
                    <Chip key={c}>{c}<button type="button" aria-label={`Remove ${c}`}><X size={9} /></button></Chip>
                  ))}
                  <ClearAll type="button" aria-label="Clear all"><X size={9} /></ClearAll>
                </QueryRow>
                <FilterInput aria-label="Filter runs" placeholder="Filter runs, e.g. run.learning_rate > 0.0001 and run.batch_size == 32" />
              </QueryMain>
              <SearchCol>
                <Primary type="submit"><Icon size={11} sw={2.200}><circle cx="11" cy="11" r="8.500" /><path d="M17.500 17.500L22.500 22.500" /></Icon>Search</Primary>
                <IconRow>
                  <SmallIconButton type="button" aria-label="Reset"><Icon size={11} sw={2.600}><path d="M4 7h9a7 7 0 1 1-6.500 9.500M8 2.500L3.500 7 8 11.500" /></Icon></SmallIconButton>
                  <SmallIconButton type="button" aria-label="Edit"><Icon size={11}><path d="M2 22l2-6L16 4l4 4L8 20zM17 3l2-2 4 4-2 2z" fill="currentColor" stroke="none" /></Icon></SmallIconButton>
                  <SmallIconButton type="button" aria-label="Copy"><Icon size={11} sw={2.400}><path d="M4 4h16v18H4zM8 2h8v4H8z" /></Icon></SmallIconButton>
                </IconRow>
              </SearchCol>
            </QueryArea>
            <GroupBy>
              <GroupTitle>GROUP BY</GroupTitle>
              <GroupRow>
                <GroupButton aria-label="Color">
                  <Icon size={18} sw={2}>
                    <path d="M12 1.500a10.500 10.500 0 0 0 0 21c2.500 0 3-1.500 2.300-3-.8-2 .2-3.800 2.700-3.800h2.500c2 0 3-1.700 3-4C22.500 6 18 1.500 12 1.500z" />
                    {dots([[6.500, 12.500], [8, 7.500], [12.800, 6], [17.300, 8.500]], 1.800)}
                  </Icon>
                </GroupButton>
                <GroupButton aria-label="Stroke">
                  <Icon size={18} sw={3}><path d="M1 5.500h22M1 12h8.500M12 12h11" /><path d="M1 18.500h22" strokeDasharray="2.400 2.400" strokeWidth="2.400" /></Icon>
                </GroupButton>
                <GroupButton $on aria-label="Chart">
                  <Icon size={18} sw={2.200}><rect x="1.500" y="1.500" width="8.500" height="11" rx="1" /><rect x="14" y="1.500" width="8.500" height="7" rx="1" /><rect x="1.500" y="16" width="8.500" height="6.500" rx="1" /><rect x="14" y="12" width="8.500" height="10.500" rx="1" /></Icon>
                </GroupButton>
              </GroupRow>
            </GroupBy>
          </Controls>

          <ChartSection>
            <ChartGrid>
              {CHARTS.map((c, i) => <Chart key={c.name} def={c} index={i} />)}
            </ChartGrid>
            <Legend>
              <LegendTitle>CHARTS</LegendTitle>
              <LegendTable>
                <thead><tr><th>#</th><th>metric.name</th></tr></thead>
                <tbody>
                  {CHARTS.map((c, i) => (
                    <tr key={c.name}><td><Num>{i + 1}</Num></td><td>"{c.name}"</td></tr>
                  ))}
                </tbody>
              </LegendTable>
            </Legend>
            <Tools>
              {TOOLS.map(t => (
                <ToolRow key={t.label}>
                  <Caret>{t.caret && <svg width="5" height="8" viewBox="0 0 5 8" fill="none" stroke="currentColor"><path d="M4 1L1 4l3 3" /></svg>}</Caret>
                  <Tool $on={t.on} aria-label={t.label}><Icon size={13}>{t.icon}</Icon></Tool>
                </ToolRow>
              ))}
            </Tools>
          </ChartSection>

          <TableBar>
            <LayoutButton aria-label="Chart view"><LayoutIcon fill={C.navy} top={8} color={C.navy} /></LayoutButton>
            <LayoutButton aria-label="Split view"><LayoutIcon fill={C.blue} top={6} color="#6aa5ef" /></LayoutButton>
            <LayoutButton aria-label="Table view"><LayoutIcon fill={C.navy} top={3} color={C.navy} /></LayoutButton>
            <Rule $gap={5} />
            <Spring style={{ flex: '0 0 5px' }} />
            <TextButton $on><Icon size={11} sw={2}><rect x="1.500" y="3" width="21" height="18" rx="1.500" /><path d="M1.500 9h21M8.500 3v18M15.500 3v18" /></Icon>Manage Columns</TextButton>
            <TextButton><Icon size={11} sw={2.400}><path d="M1 12c5-9 17-9 22 0-5 9-17 9-22 0zM3 2l18 20" /><circle cx="12" cy="12" r="3.500" fill="currentColor" /></Icon>Hide Lines</TextButton>
            <TextButton><Icon size={11} sw={2.400}><path d="M8 15V4M16 9v12" /><path d="M8 1l4 5H4zM16 24l4-5h-8z" fill="currentColor" stroke="none" /></Icon>Sort</TextButton>
            <TextButton><Icon size={11} sw={2.400}><path d="M5 5v14M10 4h13M10 9.500h13M10 15h13M10 20.500h13" /><path d="M5 1l4 5H1zM5 23l4-5H1z" fill="currentColor" stroke="none" /></Icon>Row Height</TextButton>
            <Spring />
            <Outline $w={102}>Show Table Diff</Outline>
            <Outline $w={72}><Icon size={11} sw={2.400}><path d="M12 3v13M7 11l5 5 5-5M1.500 17v4h21v-4" /></Icon>Export</Outline>
          </TableBar>
          <TableArea>
            <TableView>
              <RunsTable />
              <PinEdge $side="left" $at={209} />
              <PinEdge $side="right" $at={26} />
            </TableView>
            <VBar>
              <svg width="6" height="4" viewBox="0 0 6 4"><path d="M3 0l3 4H0z" fill="currentColor" /></svg>
              <svg width="6" height="4" viewBox="0 0 6 4"><path d="M3 4l3-4H0z" fill="currentColor" /></svg>
            </VBar>
          </TableArea>
          <HBar>
            <svg width="4" height="6" viewBox="0 0 4 6"><path d="M0 3l4-3v6z" fill="currentColor" /></svg>
            <span />
            <svg width="4" height="6" viewBox="0 0 4 6"><path d="M4 3L0 0v6z" fill="currentColor" /></svg>
          </HBar>
        </Main>
      </Page>
    </>
  );
}
